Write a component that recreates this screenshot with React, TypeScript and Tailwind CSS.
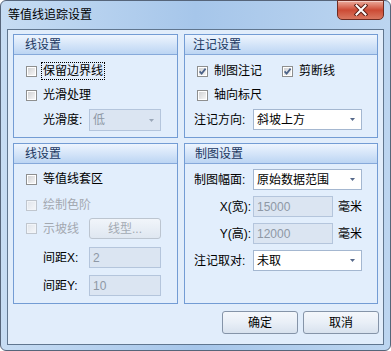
import React from 'react';

const FONT = "font-['Liberation_Sans','Noto_Sans_CJK_SC',sans-serif]";

type CheckProps = { checked?: boolean; disabled?: boolean };

const Check: React.FC<CheckProps> = ({ checked, disabled }) => (
  <span
    className={`relative flex w-[11px] h-[11px] shrink-0 border p-[1px] ${
      disabled ? 'border-[#c0c6ce] bg-[#f1f4f8]' : 'border-[#8e8f8f] bg-white'
    }`}
  >
    <span
      className={`flex-1 ${
        disabled ? 'bg-linear-to-br from-[#e2e6ec] to-[#f3f5f8]' : 'bg-linear-to-br from-[#d2d3d5] to-[#f6f6f6]'
      }`}
    />
    {checked && (
      <svg className="absolute left-0 top-0" width="9" height="9" viewBox="0 0 9 9">
        <path d="M1.6 4.4 L3.6 6.6 L7.6 1.6" fill="none" stroke="#4b6288" strokeWidth="1.7" />
      </svg>
    )}
  </span>
);

const Arrow: React.FC<{ muted?: boolean }> = ({ muted }) => (
  <svg width="5" height="3" viewBox="0 0 5 3" className="mr-[6px]">
    <path d="M0 0 H5 L2.5 3 Z" fill={muted ? '#9aa7b8' : '#56698a'} />
  </svg>
);

const Combo: React.FC<{ value: string; disabled?: boolean; w: string; h?: string }> = ({ value, disabled, w, h }) => (
  <div
    className={`flex items-center border ${w} ${h ?? 'h-[21px]'} ${
      disabled ? 'border-[#b4c5dc] bg-[#dbe5f2] text-[#8e98a5]' : 'border-[#a4b7d0] bg-white text-black'
    }`}
  >
    <span className="flex-1 pl-[3px] leading-[14px]">{value}</span>
    <Arrow muted={disabled} />
  </div>
);

const Field: React.FC<{ value: string; w: string }> = ({ value, w }) => (
  <div className={`flex items-center h-[21px] border border-[#b4c5dc] bg-[#dbe5f2] text-[#8e98a5] pl-[3px] ${w}`}>
    <span className="leading-[14px]">{value}</span>
  </div>
);

const Group: React.FC<{ title: string; pad: string; h: string; w: string; children: React.ReactNode }> = ({
  title,
  pad,
  h,
  w,
  children,
}) => (
  <div className={`flex flex-col border border-[#739cd4] bg-[#e2eefc] ${h} ${w}`}>
    <div
      className={`flex items-center h-[20px] shrink-0 border-b border-[#86a9da] bg-linear-to-b from-[#eef5fe] to-[#bcd5f3] text-[#1b3760] ${pad}`}
    >
      <span className="leading-[14px]">{title}</span>
    </div>
    {children}
  </div>
);

const CheckRow: React.FC<{ label: string; checked?: boolean; disabled?: boolean; focus?: boolean; className?: string }> = ({
  label,
  checked,
  disabled,
  focus,
  className,
}) => (
  <div className={`flex items-center h-[18px] ${className ?? ''}`}>
    <Check checked={checked} disabled={disabled} />
    <span
      className={`ml-[4px] h-[18px] flex items-center leading-[14px] ${
        focus ? 'border border-dotted border-black px-[1px]' : 'px-[2px]'
      } ${disabled ? 'text-[#a2a8b0]' : 'text-black'}`}
    >
      {label}
    </span>
  </div>
);

const Button: React.FC<{ label: string; disabled?: boolean; w: string; h: string }> = ({ label, disabled, w, h }) => (
  <div
    className={`flex items-center justify-center rounded-[3px] border ${w} ${h} ${
      disabled
        ? 'border-[#bcc5d0] bg-linear-to-b from-[#f1f5fa] to-[#dfe7f1] text-[#a3aab3]'
        : 'border-[#8594a8] bg-linear-to-b from-[#f4f7fb] via-[#e9eff7] to-[#d8e2ee] text-black'
    }`}
  >
    <span className="leading-[14px]">{label}</span>
  </div>
);

export default function App() {
  return (
    <div className={`w-[391px] h-[351px] bg-white text-[12px] ${FONT}`}>
      <div className="flex flex-col w-[391px] h-[351px] rounded-[6px] border border-[#56657a] bg-linear-to-r from-[#c6dcf3] via-[#a6c6ea] to-[#bcd5f0] px-[6px] pb-[5px]">
        {/* title bar */}
        <div className="flex items-start justify-between h-[28px] shrink-0">
          <span className="pl-[1px] mt-[7px] leading-[14px] text-black">等值线追踪设置</span>
          <div className="-mt-[1px] flex items-center justify-center w-[47px] h-[20px] rounded-b-[5px] border border-[#6e2c22] bg-linear-to-b from-[#eaaa9b] via-[#cc4a34] to-[#d97760] shadow-[inset_0_1px_0_rgba(255,255,255,0.45)]">
            <svg width="14" height="12" viewBox="0 0 14 12">
              <path d="M2.5 1.5 L11.5 10.5 M11.5 1.5 L2.5 10.5" stroke="#5a1f16" strokeWidth="4" strokeLinecap="square" />
              <path d="M2.5 1.5 L11.5 10.5 M11.5 1.5 L2.5 10.5" stroke="#ffffff" strokeWidth="2" strokeLinecap="square" />
            </svg>
          </div>
        </div>

        {/* client area */}
        <div className="flex flex-col flex-1 border border-[#60768f] bg-[#e1edfb] px-[5px] pt-[4px]">
          <div className="flex gap-[6px]">
            <Group title="线设置" pad="pl-[11px]" h="h-[104px]" w="w-[165px]">
              <div className="flex flex-col pt-[7px]">
                <CheckRow className="pl-[12px]" label="保留边界线" focus />
                <CheckRow className="pl-[12px] mt-[6px]" label="光滑处理" />
                <div className="flex items-center mt-[5px] pl-[29px]">
                  <span className="w-[46px] leading-[14px]">光滑度:</span>
                  <Combo value="低" disabled w="w-[72px]" h="h-[22px]" />
                </div>
              </div>
            </Group>
            <Group title="注记设置" pad="pl-[8px]" h="h-[104px]" w="w-[194px]">
              <div className="flex flex-col pt-[7px]">
                <div className="flex items-center pl-[12px]">
                  <div className="w-[85px]">
                    <CheckRow label="制图注记" checked />
                  </div>
                  <CheckRow label="剪断线" checked />
                </div>
                <CheckRow className="pl-[12px] mt-[6px]" label="轴向标尺" />
                <div className="flex items-center mt-[5px] pl-[9px]">
                  <span className="w-[59px] leading-[14px]">注记方向:</span>
                  <Combo value="斜坡上方" w="w-[109px]" />
                </div>
              </div>
            </Group>
          </div>

          <div className="flex gap-[6px] mt-[5px]">
            <Group title="线设置" pad="pl-[11px]" h="h-[161px]" w="w-[165px]">
              <div className="flex flex-col pt-[6px]">
                <CheckRow className="pl-[12px]" label="等值线套区" />
                <CheckRow className="pl-[12px] mt-[8px]" label="绘制色阶" disabled />
                <div className="flex items-center mt-[4px] pl-[12px] h-[21px]">
                  <div className="w-[63px]">
                    <CheckRow label="示坡线" disabled />
                  </div>
                  <Button label="线型..." disabled w="w-[72px]" h="h-[21px]" />
                </div>
                <div className="flex items-center mt-[8px] pl-[29px]">
                  <span className="w-[46px] leading-[14px]">间距X:</span>
                  <Field value="2" w="w-[72px]" />
                </div>
                <div className="flex items-center mt-[7px] pl-[29px]">
                  <span className="w-[46px] leading-[14px]">间距Y:</span>
                  <Field value="10" w="w-[72px]" />
                </div>
              </div>
            </Group>
            <Group title="制图设置" pad="pl-[10px]" h="h-[161px]" w="w-[194px]">
              <div className="flex flex-col pt-[5px]">
                <div className="flex items-center pl-[9px]">
                  <span className="w-[59px] leading-[14px]">制图幅面:</span>
                  <Combo value="原始数据范围" w="w-[109px]" />
                </div>
                <div className="flex items-center mt-[6px]">
                  <span className="w-[68px] pr-[2px] text-right leading-[14px]">X(宽):</span>
                  <Field value="15000" w="w-[80px]" />
                  <span className="ml-[5px] leading-[14px]">毫米</span>
                </div>
                <div className="flex items-center mt-[6px]">
                  <span className="w-[68px] pr-[2px] text-right leading-[14px]">Y(高):</span>
                  <Field value="12000" w="w-[80px]" />
                  <span className="ml-[5px] leading-[14px]">毫米</span>
                </div>
                <div className="flex items-center mt-[6px] pl-[9px]">
                  <span className="w-[59px] leading-[14px]">注记取对:</span>
                  <Combo value="未取" w="w-[109px]" />
                </div>
              </div>
            </Group>
          </div>

          <div className="flex justify-end gap-[5px] mt-[7px] -mr-[1px]">
            <Button label="确定" w="w-[76px]" h="h-[23px]" />
            <Button label="取消" w="w-[76px]" h="h-[23px]" />
          </div>
        </div>
      </div>
    </div>
  );
}
